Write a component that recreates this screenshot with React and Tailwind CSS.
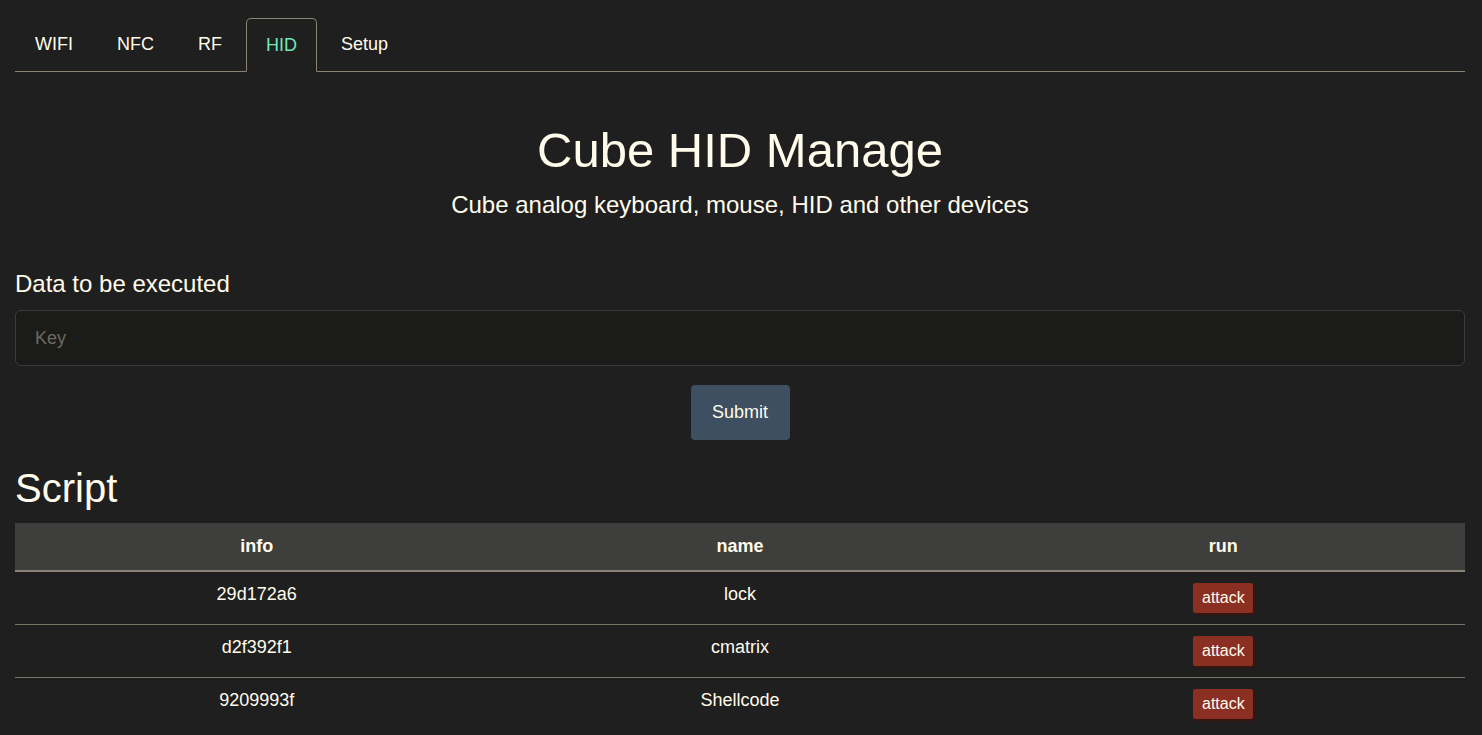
import React, { useState } from 'react';

const tabs = ['WIFI', 'NFC', 'RF', 'HID', 'Setup'];

const scripts = [
  { info: '29d172a6', name: 'lock' },
  { info: 'd2f392f1', name: 'cmatrix' },
  { info: '9209993f', name: 'Shellcode' },
];

const App = () => {
  const [active, setActive] = useState('HID');
  const [data, setData] = useState('');

  return (
    <div className="min-h-screen bg-[#1f1f1f] pl-[15px] pr-[17px] pt-[18px] text-[#fffbeb] font-['Liberation_Sans',Arial,sans-serif]">
      {/* Tabs */}
      <div className="flex gap-[4px] border-b border-[#8a8274]">
        {tabs.map((t) => (
          <button
            key={t}
            onClick={() => setActive(t)}
            className={
              t === active
                ? '-mb-px h-[54px] rounded-t-[5px] border border-[#8a8274] border-b-[#1f1f1f] bg-[#1f1f1f] px-[19px] text-[18px] text-[#6ee7b7]'
                : 'h-[53px] px-5 text-[18px] text-[#fffbeb]'
            }
          >
            {t}
          </button>
        ))}
      </div>

      {/* Header */}
      <div className="mt-[51px] text-center">
        <h1 className="text-[49px] leading-[55px]">Cube HID Manage</h1>
        <p className="mt-[13px] text-[24px] leading-[28px]">Cube analog keyboard, mouse, HID and other devices</p>
      </div>

      {/* Form */}
      <div className="mt-[51px]">
        <label className="block text-[24px] leading-[28px]">Data to be executed</label>
        <input
          type="text"
          placeholder="Key"
          value={data}
          onChange={(e) => setData(e.target.value)}
          className="mt-3 h-[56px] w-full rounded-[6px] border border-[#3b3b39] bg-[#1b1b19] px-[19px] text-[18px] text-[#fffbeb] outline-none placeholder:text-[#6b6a64]"
        />
        <div className="mt-[19px] flex justify-center">
          <button className="h-[55px] w-[99px] rounded-[4px] bg-[#3d4f60] text-[18px] text-[#fffbeb]">Submit</button>
        </div>
      </div>

      {/* Script table */}
      <h2 className="mt-[25px] text-[40px] leading-[46px]">Script</h2>
      <table className="mt-3 w-full table-fixed border-collapse text-[18px]">
        <thead>
          <tr className="h-[48px] border-b-2 border-[#8a8274] bg-[#3e3e3c]">
            <th className="font-bold">info</th>
            <th className="font-bold">name</th>
            <th className="font-bold">run</th>
          </tr>
        </thead>
        <tbody>
          {scripts.map((s, i) => (
            <tr key={s.info} className={i < scripts.length - 1 ? 'h-[53px] border-b border-[#7a7367]' : 'h-[53px]'}>
              <td className="pt-[12px] text-center align-top leading-[21px]">{s.info}</td>
              <td className="pt-[12px] text-center align-top leading-[21px]">{s.name}</td>
              <td className="pt-[11px] text-center align-top">
                <button className="h-[30px] w-[60px] rounded-[2px] bg-[#8b2f23] text-[16px] text-[#fffbeb] shadow-[2px_2px_2px_#3a1510]">
                  attack
                </button>
              </td>
            </tr>
          ))}
        </tbody>
      </table>
    </div>
  );
};

export default App;
